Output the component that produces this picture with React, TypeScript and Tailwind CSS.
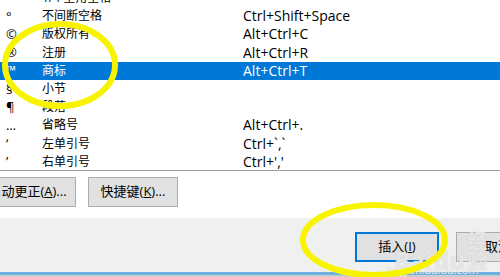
const rows = [
  { sym: "", name: "1/4 全角空格", key: "" },
  { sym: "°", name: "不间断空格", key: "Ctrl+Shift+Space" },
  { sym: "©", name: "版权所有", key: "Alt+Ctrl+C" },
  { sym: "®", name: "注册", key: "Alt+Ctrl+R" },
  { sym: "™", name: "商标", key: "Alt+Ctrl+T", active: true },
  { sym: "§", name: "小节", key: "" },
  { sym: "¶", name: "段落", key: "" },
  { sym: "…", name: "省略号", key: "Alt+Ctrl+." },
  { sym: "‘", name: "左单引号", key: "Ctrl+`,`" },
  { sym: "’", name: "右单引号", key: "Ctrl+','" },
];

export default function App() {
  return (
    <div
      className="relative w-[500px] h-[277px] overflow-hidden bg-[#f0f0f0] text-black"
      style={{ fontFamily: '"Open Sans", "Noto Sans CJK SC", sans-serif' }}
    >
      {/* special chars list */}
      <div className="h-[171px] bg-white border-b border-[#a0a0a0] overflow-hidden">
        <div className="mt-[-11px]">
          {rows.map((r) => (
            <div
              key={r.name}
              className={`flex items-center h-[18.2px] leading-none ${r.active ? "bg-[#0078d7] text-white" : ""}`}
            >
              <span className="w-[42px] shrink-0 pl-[6px] text-[13px]">{r.sym}</span>
              <span className="w-[201px] shrink-0 text-[12px]">{r.name}</span>
              <span className="text-[14px]">{r.key}</span>
            </div>
          ))}
        </div>
      </div>

      {/* button row */}
      <div className="h-[47px] bg-white flex items-start pt-[6px] gap-[12px]">
        <button className="ml-[-21px] w-[97px] h-[30px] shrink-0 bg-[#e1e1e1] border border-[#adadad] text-[13px]">
          自动更正(<u>A</u>)...
        </button>
        <button className="w-[90px] h-[30px] shrink-0 bg-[#e1e1e1] border border-[#adadad] text-[13px]">
          快捷键(<u>K</u>)...
        </button>
      </div>

      {/* footer */}
      <div className="h-[54px] flex items-start pt-[14px] pl-[355px] gap-[17px]">
        <button className="w-[84px] h-[30px] shrink-0 bg-[#e1e1e1] border-2 border-[#0078d7] text-[13px]">
          插入(<u>I</u>)
        </button>
        <button className="w-[84px] h-[30px] shrink-0 bg-[#e1e1e1] border border-[#adadad] text-[13px]">
          取消
        </button>
      </div>
      <div className="h-[3px] bg-[#6cb0e2]" />
      <div className="h-[2px] bg-[#cccccc]" />

      {/* watermark */}
      <div className="absolute left-[394px] top-[232px] flex items-end gap-[2px] text-[24px] leading-none font-bold text-white/60 [text-shadow:0_0_1px_#c0c0c0]">
        <span>Bai</span>
        <span>du</span>
        <span className="text-[20px]">经验</span>
      </div>
      <div className="absolute left-[385px] top-[264px] text-[11px] leading-none text-white/70 [text-shadow:0_0_1px_#c0c0c0]">
        jingyan.baidu.com
      </div>

      {/* yellow highlight ellipses */}
      <svg className="absolute inset-0 pointer-events-none" width="500" height="277">
        <ellipse cx="60" cy="65" rx="55" ry="41" fill="none" stroke="#f8f400" strokeWidth="6" />
        <ellipse cx="374" cy="240" rx="71" ry="35" fill="none" stroke="#f8f400" strokeWidth="6" />
      </svg>
    </div>
  );
}
